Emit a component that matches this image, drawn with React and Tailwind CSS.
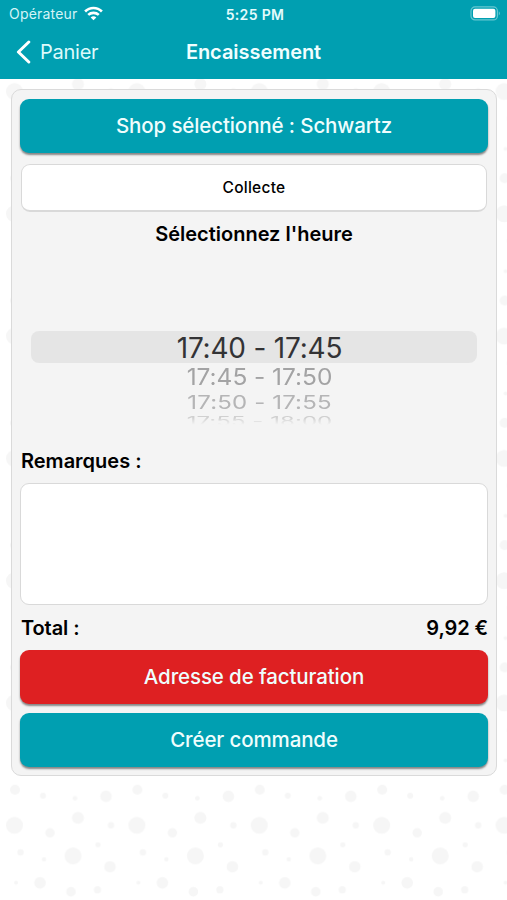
import React, { useState } from 'react';

const dots = [
  [15, 10, 5], [43, 16, 3], [75, 18.5, 2.4], [106, 16.5, 5.8],
  [14.5, 45.5, 8.5], [78, 38, 6], [50, 53, 4.7], [111, 45.5, 3.2],
  [20.5, 72.5, 3.2], [44, 79.5, 2.2], [73, 76, 8.5], [98, 65, 2.6],
  [110, 87, 5.8], [16, 103, 2], [40, 103, 5.8], [71, 112, 4.8], [97.5, 110, 3.6],
];

const slots = [
  { label: '17:40 - 17:45', style: 'h-8 pt-px text-[28px] tracking-[-0.2px] text-[#333335]' },
  { label: '17:45 - 17:50', style: 'h-7 pt-px text-[24.5px] tracking-[-0.05px] text-[#a3a3a4] scale-y-[0.94]' },
  { label: '17:50 - 17:55', style: 'h-[23px] pt-px text-[24px] tracking-[0.15px] text-[#b5b5b6] scale-y-[0.79]' },
];

function DotsBackground() {
  return (
    <svg className="absolute inset-0 w-full h-full" aria-hidden="true">
      <defs>
        <pattern id="dots" x="0" y="46" width="122.4" height="122.3" patternUnits="userSpaceOnUse">
          {dots.map(([x, y, r]) => (
            <circle key={`${x}-${y}`} cx={x} cy={y} r={r} fill="#f6f6f6" />
          ))}
        </pattern>
      </defs>
      <rect width="100%" height="100%" fill="url(#dots)" />
    </svg>
  );
}

function StatusBar() {
  return (
    <div className="grid grid-cols-3 items-center h-[27px] pl-[9px] pr-[6px] text-[14px]">
      <div className="flex items-center gap-[6px]">
        <span className="tracking-[0.2px] text-[#d5f4f7]">Opérateur</span>
        <svg width="19" height="15" viewBox="0 0 19 15" fill="none" stroke="#fff" strokeWidth="2.6">
          <path d="M1.1 5.5C5.8 0.8 13.2 0.8 17.9 5.5" />
          <path d="M4.2 8.9C7.1 6.2 11.9 6.2 14.8 8.9" />
          <path d="M9.5 14.2L6.7 11.4C8.2 10 10.8 10 12.3 11.4Z" fill="#fff" stroke="none" />
        </svg>
      </div>
      <div className="pt-px text-center font-semibold text-[14px] tracking-[0.35px] text-[#e4fbfc]">5:25 PM</div>
      <svg className="justify-self-end" width="31" height="15" viewBox="0 0 31 15">
        <rect x="1" y="0.9" width="26.4" height="13" rx="4" fill="none" stroke="#67c7d1" strokeWidth="1.2" />
        <rect x="3" y="2.8" width="22.4" height="9.2" rx="2" fill="#fff" />
        <path d="M28.8 5.2Q31 7.4 28.8 9.6Z" fill="#67c7d1" />
      </svg>
    </div>
  );
}

function ActionButton({ color, children }) {
  return (
    <button
      className={`flex items-center justify-center w-full h-[54px] rounded-[9px] text-[20.5px] font-medium tracking-[-0.12px] text-[#effdfd] shadow-[0_2px_2px_rgba(0,0,0,0.45)] ${color}`}
    >
      {children}
    </button>
  );
}

export default function App() {
  const [remarks, setRemarks] = useState('');

  return (
    <div className="relative h-[900px] w-full overflow-hidden bg-white font-['Inter',sans-serif] text-black">
      <DotsBackground />
      <div className="relative">
        <header className="h-[79px] bg-[#009fb1]">
          <StatusBar />
          <div className="grid grid-cols-[1fr_auto_1fr] items-center h-[50px] pl-[16px] pr-4">
            <button className="flex items-center gap-[9px] text-[20px] text-[#dcfafb]">
              <svg width="15" height="24" viewBox="0 0 15 24" fill="none" stroke="#fff" strokeWidth="3" strokeLinecap="round" strokeLinejoin="round">
                <path d="M12.8 2L2.4 12l10.4 10" />
              </svg>
              <span className="tracking-[-0.25px]">Panier</span>
            </button>
            <h1 className="text-[20px] font-semibold tracking-[-0.05px] text-[#f0feff]">Encaissement</h1>
          </div>
        </header>

        <main className="mt-[10px] ml-[11px] mr-[10px] h-[687px] rounded-[10px] border-[1.5px] border-[#dadada] bg-[#f4f4f4] px-2 pt-[9px]">
          <ActionButton color="bg-[#009fb1]">Shop sélectionné : Schwartz</ActionButton>
          <div className="mx-px mt-[11px] flex items-center justify-center h-[48px] rounded-[9px] border border-[#d9d9d9] border-b-2 bg-white pt-px text-[15.5px] font-medium tracking-[0.25px]">
            Collecte
          </div>
          <h2 className="mt-[7px] h-[30px] leading-[30px] text-center text-[20px] font-semibold">
            Sélectionnez l'heure
          </h2>

          <div className="mt-[82px] mx-[11px] h-[115px]">
            {slots.map((slot, i) => (
              <div
                key={slot.label}
                className={`flex items-center justify-center pl-[11px] ${slot.style} ${i === 0 ? 'rounded-[8px] bg-[#e5e5e5]' : ''}`}
              >
                {slot.label}
              </div>
            ))}
            {/* last row of the wheel fades out */}
            <div className="flex justify-center pl-[11px] pt-px h-[27px] origin-top scale-y-[0.55] leading-[26px] text-[24px] tracking-[0.05px] text-[#d0d0d0] [mask-image:linear-gradient(black_25%,transparent_72%)]">
              17:55 - 18:00
            </div>
          </div>

          <label className="block h-[30px] leading-[30px] pl-px text-[20px] font-semibold" htmlFor="remarks">
            Remarques :
          </label>
          <textarea
            id="remarks"
            value={remarks}
            onChange={(e) => setRemarks(e.target.value)}
            className="mt-[7px] block w-full h-[122px] resize-none rounded-[9px] border-[1.5px] border-[#d9d9d9] bg-white p-2 outline-none"
          />
          <div className="mt-[8px] flex justify-between h-[30px] leading-[30px] pl-px text-[20px] font-semibold tracking-[-0.1px]">
            <span>Total :</span>
            <span>9,92 €</span>
          </div>
          <div className="mt-[7px] flex flex-col gap-[9px]">
            <ActionButton color="bg-[#de2022]">Adresse de facturation</ActionButton>
            <ActionButton color="bg-[#009fb1]">Créer commande</ActionButton>
          </div>
        </main>
      </div>
    </div>
  );
}
